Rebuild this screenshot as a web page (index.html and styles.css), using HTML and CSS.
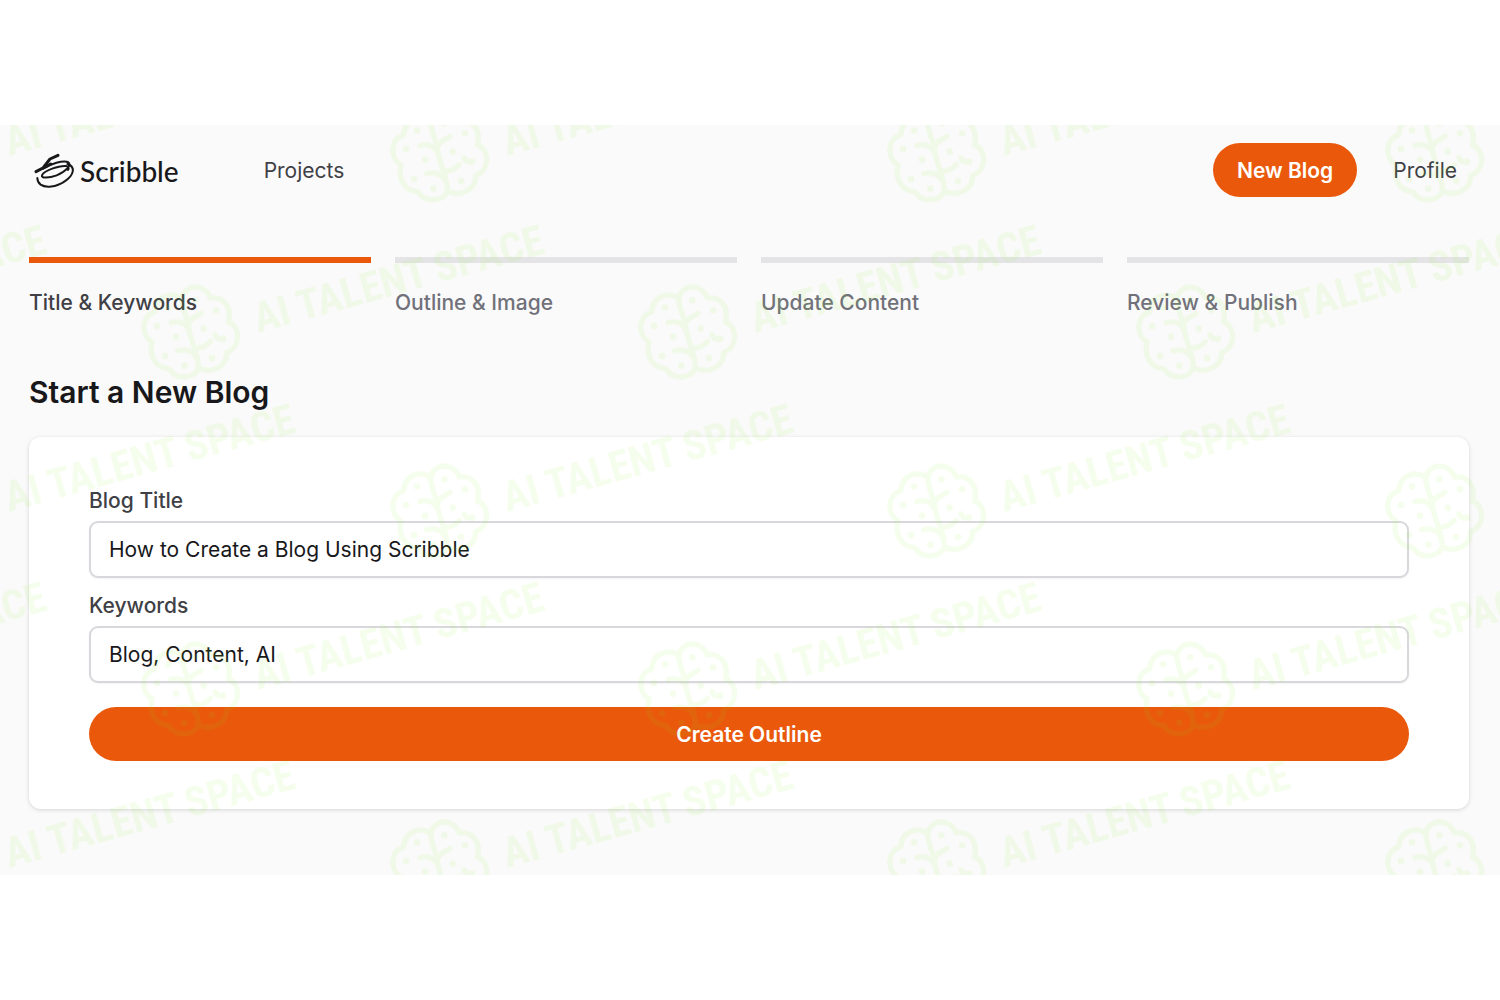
FILE: index.html
```html
<!DOCTYPE html>
<html lang="en">
  <head>
    <meta charset="utf-8" />
    <title>Scribble</title>
    <link rel="stylesheet" href="styles.css">
  </head>
  <body>
    <div class="app">
      <header>
        <a href="#" class="logo">
          <svg class="logo-mark" viewBox="12 9 126 108" fill="none" stroke="#18181b" stroke-linecap="round" stroke-linejoin="round">
            <path d="M84 16 L60 27 L42 50" stroke-width="9" />
            <path d="M18 65 L62 42" stroke-width="9" />
            <path d="M40 56 C62 42 98 30 114 36 C128 44 106 66 80 76 C58 84 32 86 36 76 C42 62 88 46 108 48 C116 49 118 54 114 60" stroke-width="6" />
            <path d="M112 42 C138 50 132 76 104 94 C78 112 46 114 32 104 C24 98 22 92 22 84" stroke-width="6" />
          </svg>
          <span>Scribble</span>
        </a>
        <nav>
          <a href="#">Projects</a>
        </nav>
        <div class="actions">
          <button type="button" class="button">New Blog</button>
          <a href="#">Profile</a>
        </div>
      </header>

      <main>
        <ol class="steps">
          <li class="step active">Title &amp; Keywords</li>
          <li class="step">Outline &amp; Image</li>
          <li class="step">Update Content</li>
          <li class="step">Review &amp; Publish</li>
        </ol>

        <h1>Start a New Blog</h1>

        <form class="card">
          <label for="blogTitle">Blog Title</label>
          <input type="text" id="blogTitle" value="How to Create a Blog Using Scribble" />
          <label for="keywords">Keywords</label>
          <input type="text" id="keywords" value="Blog, Content, AI" />
          <button type="button" class="button">Create Outline</button>
        </form>
      </main>

      <svg class="watermark" aria-hidden="true">
        <defs>
          <g id="mark">
            <g transform="scale(0.3333) translate(-182 -176)">
              <path class="watermark-line" d="M154 76 C132 55 76 62 73 116 C32 126 30 186 65 206 C54 250 78 284 116 286 C136 322 192 316 204 284 C246 304 292 276 288 238 C332 224 332 158 294 146 C306 102 280 68 240 74 C222 28 162 32 154 76 Z" />
              <path class="watermark-line" d="M154 76 C154 108 172 130 176 168 C180 204 204 236 204 284" />
              <path class="watermark-line" d="M122 148 C146 140 168 150 176 172 M176 148 C184 130 198 132 212 120 M142 232 C164 226 188 232 200 256 M192 224 C212 226 228 218 240 204 M254 184 C256 194 264 198 276 196" />
              <g class="watermark-dots">
                <circle cx="113" cy="102" r="10" />
                <circle cx="195" cy="81" r="10" />
                <circle cx="257" cy="111" r="10" />
                <circle cx="80" cy="158" r="10" />
                <circle cx="137" cy="190" r="10" />
                <circle cx="220" cy="166" r="10" />
                <circle cx="278" cy="196" r="10" />
                <circle cx="104" cy="248" r="10" />
                <circle cx="162" cy="277" r="10" />
                <circle cx="245" cy="254" r="10" />
              </g>
            </g>
            <text class="watermark-text" transform="translate(67 1) rotate(-15.5)">AI TALENT SPACE</text>
          </g>
          <g id="row">
            <use href="#mark" x="-58" />
            <use href="#mark" x="440" />
            <use href="#mark" x="937" />
            <use href="#mark" x="1435" />
          </g>
        </defs>
        <g class="watermark-fill">
          <use href="#row" y="30" />
          <use href="#row" x="-249" y="207" />
          <use href="#row" y="386" />
          <use href="#row" x="-249" y="564" />
          <use href="#row" y="742" />
        </g>
      </svg>
    </div>
  </body>
</html>
```

FILE: styles.css
```css
* {
  box-sizing: border-box;
}

body {
  font-family: Inter, sans-serif;
  font-size: 21px;
  line-height: 30px;
  margin: 0;
  min-height: 100vh;
  display: flex;
  flex-direction: column;
  justify-content: center;
  background-color: #fff;
  color: #18181b;
}

.app {
  position: relative;
  padding: 18px 31px 66px 29px;
  background-color: #fafafa;
}

header {
  display: flex;
  align-items: center;
}

header a {
  display: block;
  padding-top: 2px;
  color: #3f3f46;
  text-decoration: none;
}

header .logo {
  display: flex;
  align-items: center;
  gap: 4px;
  padding-left: 5px;
  color: #18181b;
  font-family: Lato, sans-serif;
  font-size: 28px;
  font-weight: 500;
}

.logo-mark {
  width: 42px;
  height: 36px;
}

nav {
  margin-left: 85px;
}

.actions {
  display: flex;
  align-items: center;
  gap: 36px;
  margin-left: auto;
  padding-right: 12px;
}

.button {
  height: 54px;
  padding: 0 24px;
  border: none;
  border-radius: 27px;
  background-color: #ea580c;
  color: #fff;
  font-family: inherit;
  font-size: 21px;
  font-weight: 600;
  cursor: pointer;
}

.steps {
  display: grid;
  grid-template-columns: repeat(4, 1fr);
  gap: 24px;
  margin: 60px 0 0;
  padding: 0;
  list-style: none;
}

.step {
  padding-top: 25px;
  border-top: 6px solid #e4e4e7;
  color: #71717a;
  font-weight: 500;
}

.step.active {
  border-color: #ea580c;
  color: #3f3f46;
}

h1 {
  margin: 53px 0 24px;
  font-size: 30px;
  line-height: 42px;
  font-weight: 600;
}

.card {
  display: flex;
  flex-direction: column;
  margin: 0;
  padding: 49px 60px 48px;
  border-radius: 12px;
  background-color: #fff;
  box-shadow: 0 1px 4px rgba(0, 0, 0, 0.15);
}

.card label {
  margin-bottom: 5px;
  color: #3f3f46;
  font-weight: 500;
}

.card input {
  height: 57px;
  margin-bottom: 13px;
  padding: 0 18px;
  border: 2px solid #d8d8dc;
  border-radius: 9px;
  background-color: #fff;
  box-shadow: 0 1px 2px rgba(0, 0, 0, 0.05);
  color: #18181b;
  font-family: inherit;
  font-size: 21px;
}

.card .button {
  margin-top: 11px;
}

.watermark {
  position: absolute;
  top: 0;
  left: 0;
  width: 100%;
  height: 100%;
  overflow: hidden;
  pointer-events: none;
}

.watermark-fill {
  opacity: 0.08;
  fill: #84f01e;
}

.watermark-line {
  fill: none;
  stroke: #84f01e;
  stroke-width: 16;
  stroke-linecap: round;
  stroke-linejoin: round;
}

.watermark-text {
  font-family: "Liberation Sans Narrow", "Roboto Condensed", Roboto, sans-serif;
  font-size: 42px;
  font-weight: 700;
}
```
